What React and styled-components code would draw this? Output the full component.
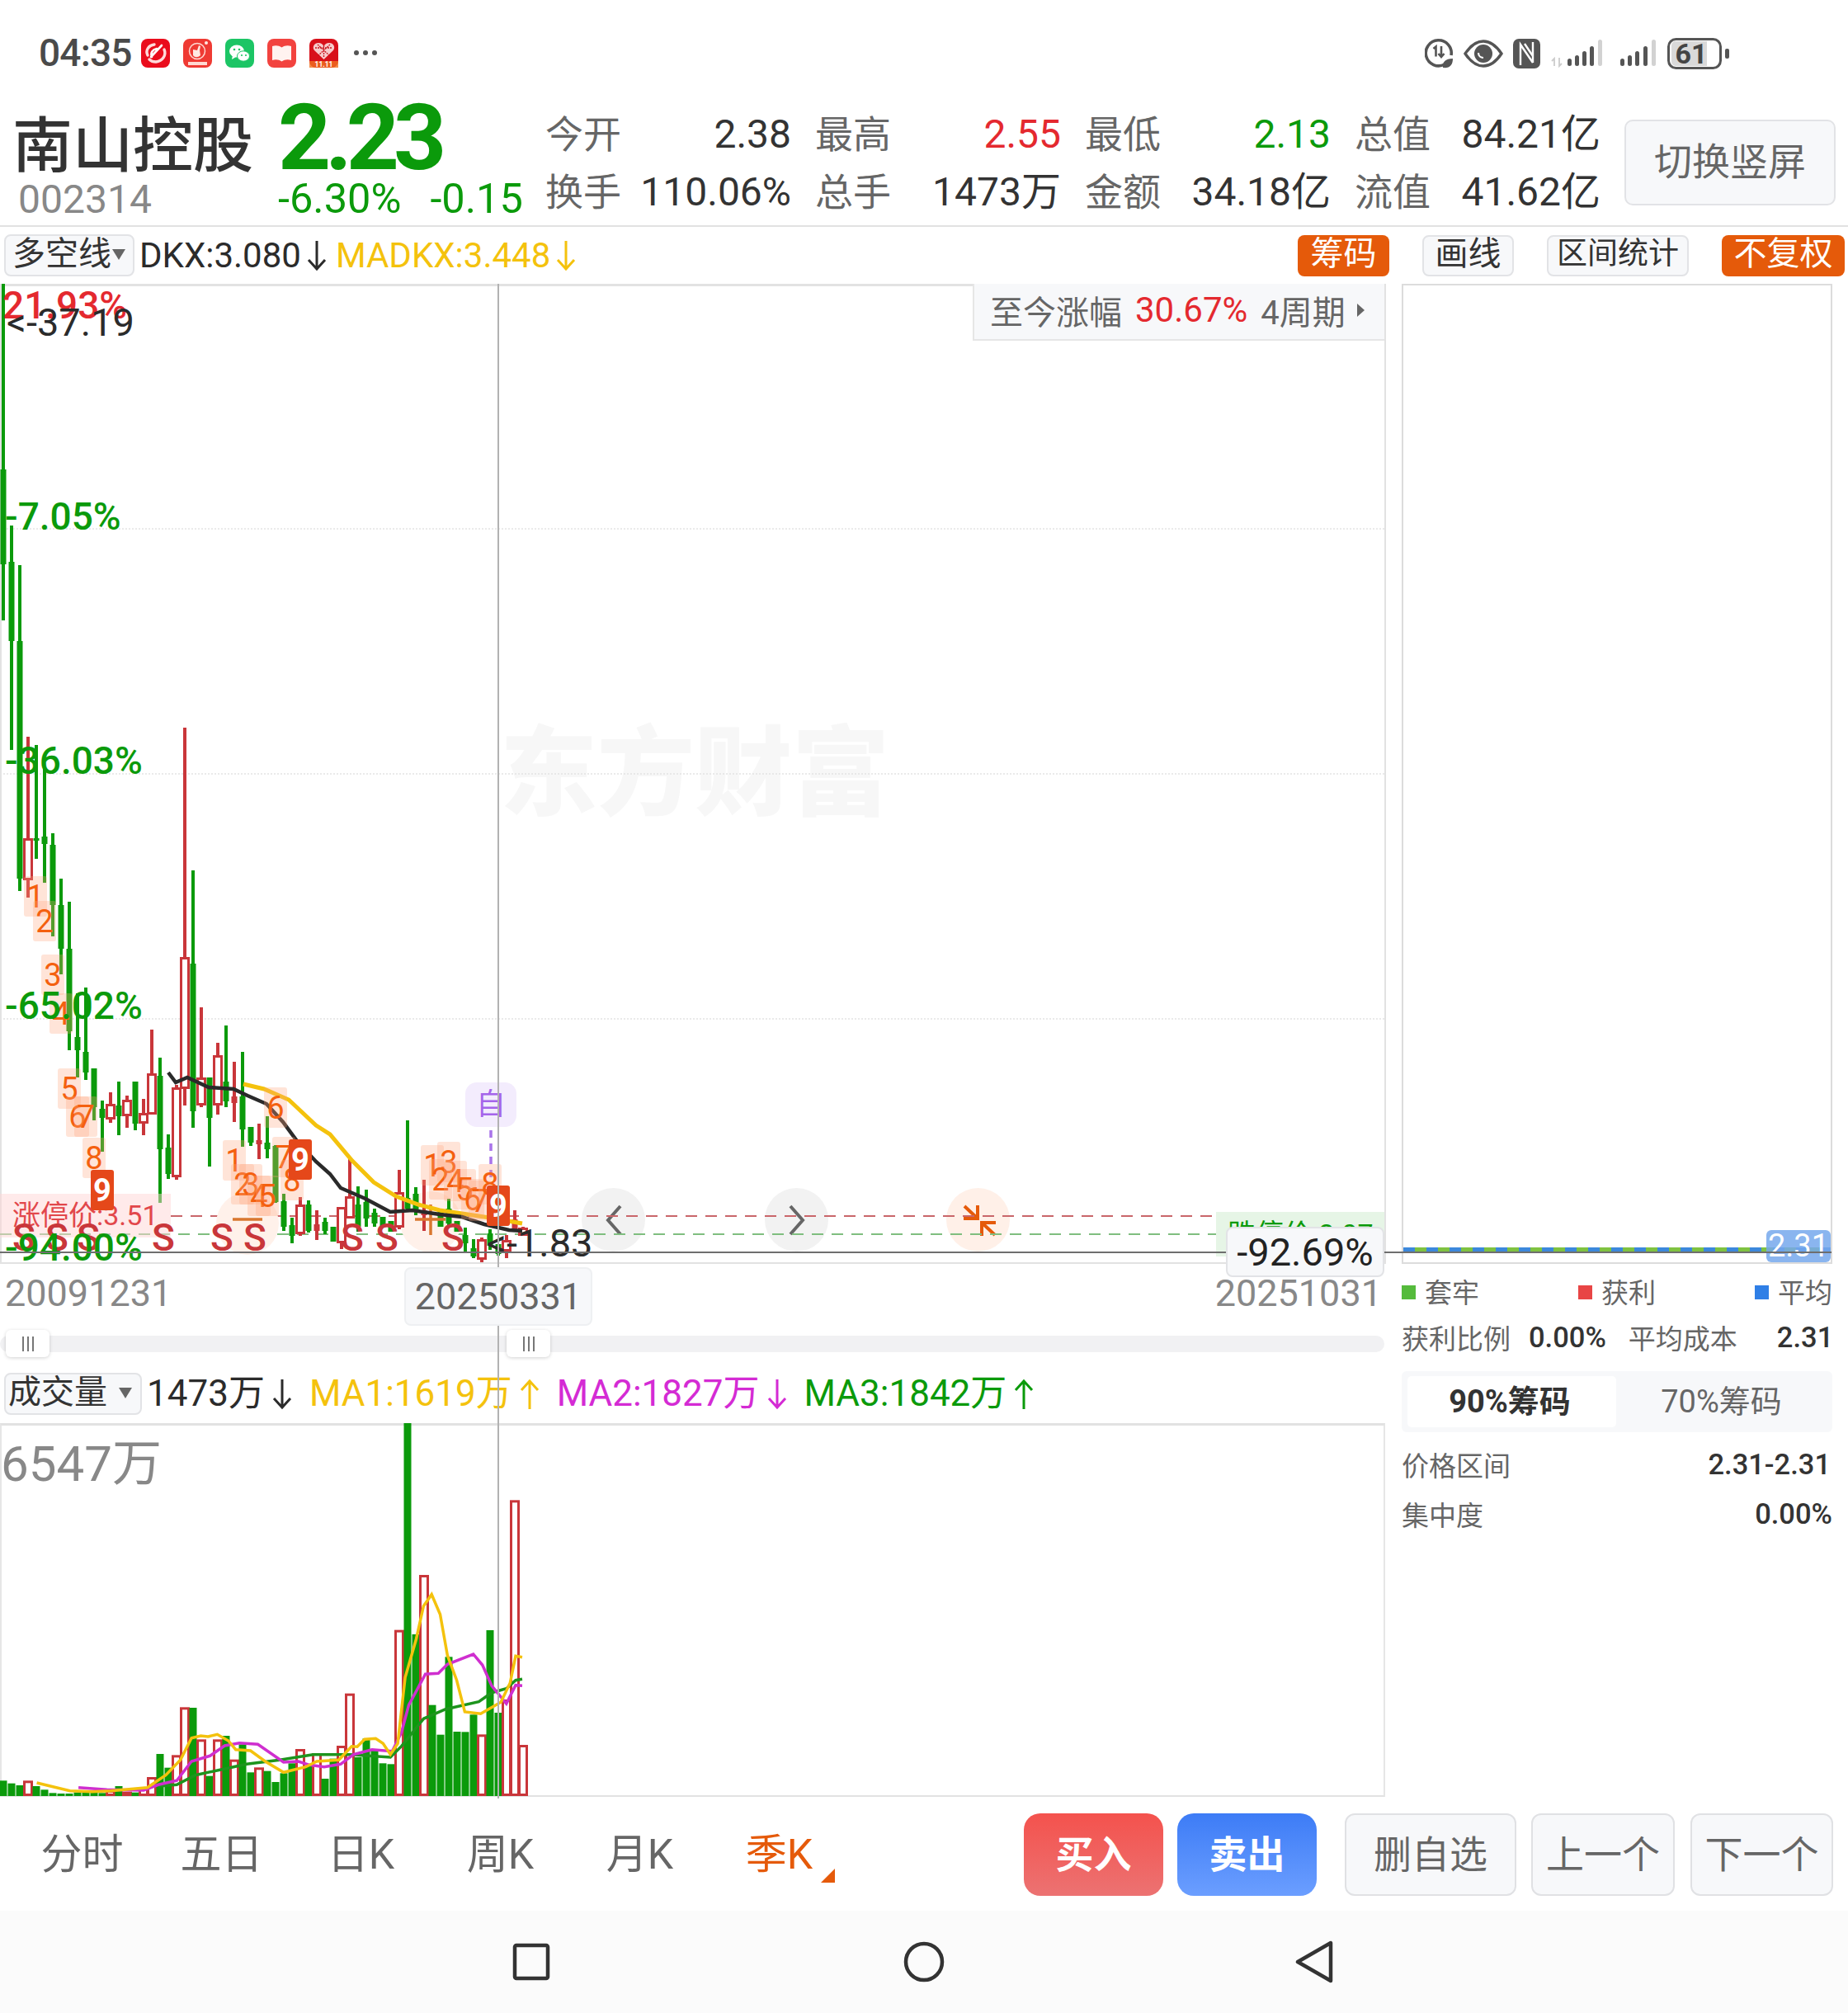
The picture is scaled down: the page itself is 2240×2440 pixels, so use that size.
import React from 'react';
import styled, { createGlobalStyle } from 'styled-components';

const GREEN = '#0b9a0b';
const RED = '#c9363a';
const BRIGHT_RED = '#e4292f';
const ORANGE = '#e55a0a';
const YELLOW = '#f4c20d';
const MAGENTA = '#d42bd4';
const GRAY = '#888888';
const LABEL = '#666666';
const INK = '#2b2b2b';
const SOFT = '#f7f8fa';
const EDGE = '#e2e3e6';
const CHART_TOP = 344;
// overlays are placed against the frame's padding box, below its 3px top border
const CHART_ORIGIN = CHART_TOP + 3;

const Global = createGlobalStyle`
  html, body { margin: 0; padding: 0; background: #fff; }
  body { font-family: Roboto, "Noto Sans CJK SC", sans-serif; width: 2240px; }
  * { box-sizing: border-box; }
`;

const Page = styled.div`
  width: 2240px;
  height: 2440px;
  display: flex;
  flex-direction: column;
  overflow: hidden;
  background: #fff;
  color: ${INK};
  font-family: Roboto, "Noto Sans CJK SC", sans-serif;
`;

/* ---------- status bar ---------- */
const StatusBar = styled.div`
  height: 120px;
  flex: none;
  display: flex;
  align-items: flex-start;
  padding: 47px 143px 0 47px;
`;
const Clock = styled.span`
  font-size: 46px;
  line-height: 35px;
  font-weight: 500;
  color: #4a4a4a;
  width: 124px;
  letter-spacing: -0.8px;
`;
const AppIcons = styled.div`
  display: flex;
  gap: 16px;
`;
const MoreDots = styled.div`
  display: flex;
  gap: 5px;
  margin: 14px 0 0 19px;
  & > i { width: 6px; height: 6px; border-radius: 50%; background: #555; display: block; }
`;
const SystemIcons = styled.div`
  margin-left: auto;
  display: flex;
  align-items: flex-start;
  gap: 12px;
`;

const Tile = ({ children, fill = '#e8101c' }) => (
  <svg width="35" height="35" viewBox="0 0 35 35">
    <rect width="35" height="35" rx="8" fill={fill} />
    {children}
  </svg>
);

const AppIconSet = () => (
  <AppIcons>
    <Tile fill="#ea0c1c">
      <path d="M8 20c-3-6 1-12 8-13M28 13c3 7-2 14-10 15-3 0-6-1-8-3" fill="none" stroke="#ffd9d9" strokeWidth="3.4" strokeLinecap="round" />
      <path d="M13 22c-2-5 1-9 6-10M12 22l13-14" fill="none" stroke="#fff" strokeWidth="2.6" strokeLinecap="round" />
    </Tile>
    <Tile fill="#ef3a33">
      <circle cx="17" cy="15" r="9.5" fill="none" stroke="#ffd9d2" strokeWidth="1.5" />
      <path d="M12 13l5 1 2-6 2 1-1 5 1 6c-3 3-7 3-9 0z" fill="#ffe9e2" />
      <circle cx="28" cy="5" r="2" fill="#ffe9e2" />
      <rect x="6" y="28" width="23" height="4" fill="#ffd9d2" />
    </Tile>
    <Tile fill="#1cc565">
      <ellipse cx="14" cy="15" rx="9" ry="7.5" fill="#fff" />
      <path d="M9 20l-1 5 5-3z" fill="#fff" />
      <ellipse cx="22" cy="21" rx="7.5" ry="6.2" stroke="#1cc565" strokeWidth="1" fill="#fff" />
      <circle cx="11" cy="13" r="1.3" fill="#1cc565" />
      <circle cx="17" cy="13" r="1.3" fill="#1cc565" />
      <circle cx="20" cy="20" r="1.1" fill="#1cc565" />
      <circle cx="25" cy="20" r="1.1" fill="#1cc565" />
    </Tile>
    <Tile fill="#f2433f">
      <path d="M6 9c4-1.500 8-1 11.500 1.500C21 8 25 7.500 29 9v17c-4-1.500-8-1-11.500 1.500C14 25 10 24.500 6 26z" fill="#fff3f0" />
    </Tile>
    <Tile fill="#d8101a">
      <rect y="27" width="35" height="8" fill="#f07020" opacity=".8" />
      <path d="M17.500 25 6 14c-3-4 0-9 5-9 3 0 5 1.500 6.500 4C19 6.500 21 5 24 5c5 0 8 5 5 9z" fill="#f7cccc" />
      <path d="M7 11h21M10 7l15 14M25 7 10 21M17.500 8v15" stroke="#c8141c" strokeWidth="1.300" strokeDasharray="2 1" />
      <text x="17.500" y="33.500" fontSize="8.500" fontWeight="700" fill="#fff" textAnchor="middle" fontFamily="Roboto, sans-serif">11.11</text>
    </Tile>
  </AppIcons>
);

const SystemIconSet = () => (
  <SystemIcons>
    <svg width="35" height="36" viewBox="0 0 35 36">
      <path d="M24 31A15.500 15.500 0 1 1 32 20" fill="none" stroke="#555" strokeWidth="3.600" />
      <path d="M10.500 12l3-2.500v12M20 9v12M16.500 18l3.500 4 3.500-4" fill="none" stroke="#555" strokeWidth="2.600" />
      <path d="M22 35c-1-7 3-11 12-11 0 8-4 12-12 11z" fill="#555" />
    </svg>
    <svg width="48" height="36" viewBox="0 0 48 36">
      <path d="M2 18C10 6 17 3 24 3s14 3 22 15c-8 12-15 15-22 15S10 30 2 18z" fill="none" stroke="#555" strokeWidth="3.400" />
      <circle cx="24" cy="18" r="11" fill="#555" />
      <path d="M18 17c0 4 3 6 6 6" fill="none" stroke="#fff" strokeWidth="2.200" />
    </svg>
    <svg width="33" height="36" viewBox="0 0 33 36">
      <rect width="33" height="36" rx="7" fill="#555" />
      <path d="M9 32V7l15 22M24 4v25M14 6l10 15" fill="none" stroke="#fff" strokeWidth="2.400" />
    </svg>
    <svg width="64" height="36" viewBox="0 0 64 36">
      <path d="M5 33V24l-3 3M11 23v10l3-3" fill="none" stroke="#ccc" strokeWidth="1.800" />
      <rect x="21" y="24" width="5" height="9" rx="2.500" fill="#555" />
      <rect x="30" y="20" width="5" height="13" rx="2.500" fill="#555" />
      <rect x="39" y="15" width="5" height="18" rx="2.500" fill="#555" />
      <rect x="48" y="9" width="5" height="24" rx="2.500" fill="#555" />
      <rect x="58" y="1" width="5" height="32" rx="2.500" fill="#d2d2d2" />
    </svg>
    <svg width="46" height="36" viewBox="0 0 46 36" style={{ marginLeft: 8 }}>
      <rect x="1" y="24" width="5" height="9" rx="2.500" fill="#555" />
      <rect x="10" y="20" width="5" height="13" rx="2.500" fill="#555" />
      <rect x="19" y="15" width="5" height="18" rx="2.500" fill="#555" />
      <rect x="29" y="9" width="5" height="24" rx="2.500" fill="#555" />
      <rect x="39" y="1" width="5" height="32" rx="2.500" fill="#d2d2d2" />
    </svg>
    <svg width="76" height="38" viewBox="0 0 76 38" style={{ marginTop: -1 }}>
      <rect x="1.500" y="1.500" width="63" height="35" rx="9" fill="#fff" stroke="#555" strokeWidth="3" />
      <path d="M5 9a5 5 0 0 1 5-5h38v30H10a5 5 0 0 1-5-5z" fill="#d9d9d9" />
      <rect x="70" y="13" width="5" height="12" rx="2" fill="#555" />
      <text x="29" y="31" fontSize="34" fontWeight="700" fill="#444" textAnchor="middle" fontFamily="Roboto, sans-serif">61</text>
    </svg>
  </SystemIcons>
);

/* ---------- quote header ---------- */
const Quote = styled.header`
  height: 155px;
  flex: none;
  display: flex;
  border-bottom: 2px solid #e2e2e2;
  padding-left: 15px;
`;
const Identity = styled.div`
  width: 322px;
  flex: none;
`;
const StockName = styled.div`
  font-size: 73px;
  line-height: 72px;
  font-weight: 500;
  margin-top: 21px;
  color: #333;
`;
const StockCode = styled.div`
  font-size: 48px;
  line-height: 48px;
  color: ${GRAY};
  margin: 5px 0 0 7px;
`;
const Pricing = styled.div`
  width: 324px;
  flex: none;
  color: ${GREEN};
`;
const BigPrice = styled.div`
  font-size: 112px;
  line-height: 112px;
  font-weight: 700;
  letter-spacing: -7px;
  margin-top: -9px;
`;
const PriceChange = styled.div`
  display: flex;
  gap: 35px;
  font-size: 50.5px;
  line-height: 50px;
  margin-top: -7px;
`;
const StatGrid = styled.div`
  display: grid;
  grid-template-columns: repeat(4, 92px 235px);
  grid-auto-rows: 70px;
  padding-top: 8px;
  width: 1308px;
  flex: none;
  font-size: 46px;
  line-height: 1;
  align-items: center;
`;
const StatLabel = styled.span`
  color: ${LABEL};
  white-space: nowrap;
`;
const StatValue = styled.span`
  text-align: right;
  padding-right: 29px;
  white-space: nowrap;
  font-size: 48px;
  color: ${(p) => p.$color || '#333'};
`;
const SwitchButton = styled.button`
  width: 256px;
  height: 104px;
  margin-top: 25px;
  border: 2px solid ${EDGE};
  border-radius: 10px;
  background: ${SOFT};
  color: ${LABEL};
  font: 46px/1 Roboto, "Noto Sans CJK SC", sans-serif;
  padding: 0 0 2px;
`;

/* ---------- indicator strip ---------- */
const IndicatorStrip = styled.div`
  height: 69px;
  flex: none;
  display: flex;
  align-items: center;
  padding: 0 4px 0 5px;
  font-size: 42px;
`;
const Selector = styled.div`
  width: ${(p) => p.$w}px;
  height: 51px;
  flex: none;
  display: flex;
  align-items: center;
  padding-left: ${(p) => p.$pad}px;
  background: ${SOFT};
  border: 2px solid ${EDGE};
  border-radius: 8px;
  font-size: 40px;
  line-height: 1;
  padding-bottom: 3px;
  color: #333;
  & > i {
    display: block;
    width: 0;
    height: 0;
    margin-left: ${(p) => p.$caret}px;
    border: 8px solid transparent;
    border-top: 13px solid #666;
    border-bottom: 0;
  }
`;
const Reading = styled.span`
  display: inline-flex;
  align-items: center;
  gap: ${(p) => p.$inner || 6}px;
  color: ${(p) => p.$color};
  margin-left: ${(p) => p.$gap}px;
  white-space: nowrap;
`;
const StripActions = styled.div`
  margin-left: auto;
  display: flex;
  gap: 40px;
`;
const StripButton = styled.button`
  height: 50px;
  width: ${(p) => p.$w}px;
  padding: 0 0 4px;
  border-radius: 8px;
  font: ${(p) => p.$size || 40}px/1 Roboto, "Noto Sans CJK SC", sans-serif;
  background: ${(p) => (p.$on ? ORANGE : SOFT)};
  color: ${(p) => (p.$on ? '#fff' : '#333')};
  border: ${(p) => (p.$on ? '0' : `2px solid ${EDGE}`)};
`;

const Arrow = ({ up, color }) => (
  <svg width="26" height="38" viewBox="0 0 26 38">
    {up ? (
      <path d="M13 37V3M3 14 13 3l10 11" fill="none" stroke={color} strokeWidth="3" />
    ) : (
      <path d="M13 1v34M3 24l10 11 10-11" fill="none" stroke={color} strokeWidth="3" />
    )}
  </svg>
);

/* ---------- main area ---------- */
const Main = styled.div`
  position: relative;
  display: flex;
  flex: none;
  height: 1834px;
`;
const LeftColumn = styled.div`
  width: 1680px;
  flex: none;
  display: flex;
  flex-direction: column;
`;
const KlineFrame = styled.div`
  position: relative;
  height: 1188px;
  flex: none;
  border: 2px solid #e2e2e2;
  border-top-width: 3px;
  background: #fff;
`;
const Drawing = styled.svg`
  position: absolute;
  left: -2px;
  top: ${(p) => p.$top}px;
  display: block;
`;
const Watermark = styled.div`
  position: absolute;
  left: 604px;
  top: 533px;
  font-size: 118px;
  line-height: 118px;
  font-weight: 900;
  color: #f7f7f7;
  white-space: nowrap;
`;
const AxisText = styled.span`
  position: absolute;
  left: ${(p) => p.$x - 2}px;
  top: ${(p) => p.$y - CHART_ORIGIN - 7}px;
  font-size: ${(p) => p.$size || 46}px;
  font-weight: ${(p) => p.$weight || 400};
  line-height: 1;
  color: ${(p) => p.$color};
  white-space: nowrap;
`;
const Signal = styled(AxisText)`
  font-weight: 500;
  color: ${RED};
`;
const TdMark = styled.span`
  position: absolute;
  width: 28px;
  height: 49px;
  display: flex;
  align-items: center;
  justify-content: center;
  font-size: 38px;
  line-height: 1;
  border-radius: 3px;
  background: ${(p) => (p.$dark ? '#e5481a' : 'rgba(255, 165, 125, .3)')};
  color: ${(p) => (p.$dark ? '#fff' : '#f4600f')};
  font-weight: ${(p) => (p.$dark ? 700 : 400)};
`;
const SinceTag = styled.div`
  position: absolute;
  right: 0;
  top: -3px;
  width: 499px;
  height: 69px;
  display: flex;
  align-items: center;
  padding: 0 0 4px 19px;
  background: ${SOFT};
  border-left: 2px solid #e6e6e6;
  border-bottom: 2px solid #e6e6e6;
  font-size: 40px;
  color: ${LABEL};
  white-space: nowrap;
  & > b { font-weight: 400; font-size: 42px; color: ${BRIGHT_RED}; margin: 0 16px 0 16px; }
  & > i {
    display: block;
    width: 0;
    height: 0;
    margin-left: 14px;
    border: 8px solid transparent;
    border-left: 9px solid #666;
    border-right: 0;
  }
`;
const LimitBadge = styled.div`
  position: absolute;
  ${(p) => (p.$side === 'left' ? 'left: -2px;' : 'right: 0;')}
  top: ${(p) => p.$y - CHART_ORIGIN}px;
  width: ${(p) => p.$w}px;
  height: ${(p) => p.$h}px;
  padding-left: ${(p) => p.$pad}px;
  background: ${(p) => p.$bg};
  color: ${(p) => p.$color};
  font-size: 34px;
  line-height: ${(p) => p.$h}px;
  white-space: nowrap;
  overflow: hidden;
`;
const PercentTag = styled.div`
  position: absolute;
  right: 0;
  top: ${1487 - CHART_ORIGIN}px;
  width: 192px;
  height: 61px;
  z-index: 3;
  display: flex;
  align-items: center;
  justify-content: center;
  background: ${SOFT};
  border: 2px solid ${EDGE};
  border-radius: 8px;
  font-size: 47px;
  color: #222;
`;
const NavCircle = styled.div`
  position: absolute;
  left: ${(p) => p.$x - 40}px;
  top: ${1440 - CHART_ORIGIN}px;
  width: 77px;
  height: 77px;
  border-radius: 50%;
  background: ${(p) => p.$bg};
  display: flex;
  align-items: center;
  justify-content: center;
`;
const SelfTag = styled.div`
  position: absolute;
  left: 562px;
  top: ${1312 - CHART_ORIGIN}px;
  width: 62px;
  height: 54px;
  border-radius: 14px;
  background: #f3ecfd;
  color: #a565ea;
  font-size: 36px;
  line-height: 54px;
  text-align: center;
`;
const Crosshair = styled.div`
  position: absolute;
  left: 603px;
  top: 0;
  height: 1836px;
  width: 2px;
  background: #b2b2b2;
  z-index: 2;
  pointer-events: none;
`;
const BaseLine = styled.div`
  position: absolute;
  left: 0;
  width: 2220px;
  top: ${1517 - CHART_TOP}px;
  height: 2px;
  background: #6e6e6e;
  z-index: 2;
`;
const DateRow = styled.div`
  position: relative;
  height: 80px;
  flex: none;
  display: flex;
  justify-content: space-between;
  padding: 13px 5px 0 6px;
  font-size: 45px;
  line-height: 46px;
  color: ${GRAY};
`;
const CursorDate = styled.div`
  position: absolute;
  left: 490px;
  top: 4px;
  width: 228px;
  height: 71px;
  z-index: 3;
  display: flex;
  align-items: center;
  justify-content: center;
  background: ${SOFT};
  border: 2px solid #eef0f2;
  border-radius: 8px;
  color: ${LABEL};
`;
const ScrollRow = styled.div`
  position: relative;
  height: 40px;
  flex: none;
  padding-top: 7px;
`;
const ScrollTrack = styled.div`
  height: 20px;
  width: 1678px;
  border-radius: 10px;
  background: #f1f1f3;
`;
const ScrollHandle = styled.div`
  position: absolute;
  left: ${(p) => p.$x}px;
  top: 0;
  width: 53px;
  height: 33px;
  z-index: 3;
  background: #fff;
  border-radius: 6px;
  box-shadow: 0 1px 4px rgba(0, 0, 0, .18);
  display: flex;
  align-items: center;
  justify-content: center;
  gap: 4px;
  & > i { display: block; width: 2px; height: 18px; background: #777; }
`;
const VolumeStrip = styled.div`
  height: 73px;
  flex: none;
  display: flex;
  align-items: flex-start;
  padding: 12px 0 0 5px;
  font-size: 44px;
  line-height: 51px;
`;
const VolumeFrame = styled.div`
  position: relative;
  height: 453px;
  flex: none;
  width: 1679px;
  border-top: 3px solid #e2e2e2;
  border-left: 2px solid #e6e6e6;
  border-right: 2px solid #e6e6e6;
  border-bottom: 2px solid #e2e2e2;
`;
const VolumeMax = styled.div`
  position: absolute;
  left: -1px;
  top: 17px;
  font-size: 60px;
  line-height: 60px;
  color: ${GRAY};
  z-index: 1;
`;

/* ---------- chip panel ---------- */
const ChipPanel = styled.aside`
  width: 522px;
  margin-left: 19px;
  flex: none;
  font-size: 33px;
  color: ${LABEL};
`;
const ChipFrame = styled.div`
  position: relative;
  height: 1188px;
  border: 2px solid #dcdcdc;
`;
const AverageLine = styled.div`
  position: absolute;
  left: 0;
  right: 0;
  top: ${1512 - CHART_TOP - 2}px;
  height: 6px;
  background: repeating-linear-gradient(90deg, #3c88dc 0 14px, #7fc241 14px 28px);
`;
const AverageBadge = styled.div`
  position: absolute;
  right: 0;
  bottom: 0;
  width: 78px;
  height: 39px;
  border-radius: 6px;
  background: rgba(118, 168, 236, .85);
  color: #fff;
  font-size: 38px;
  line-height: 39px;
  text-align: center;
  z-index: 1;
`;
const Legend = styled.div`
  height: 68px;
  display: flex;
  align-items: center;
  justify-content: space-between;
  padding-bottom: 3px;
`;
const LegendItem = styled.span`
  display: flex;
  align-items: center;
  gap: 11px;
  &::before {
    content: '';
    width: 17px;
    height: 17px;
    margin-top: 3px;
    background: ${(p) => p.$color};
  }
`;
const ChipRow = styled.div`
  height: ${(p) => p.$h}px;
  display: flex;
  align-items: center;
  white-space: nowrap;
  justify-content: ${(p) => (p.$spread ? 'space-between' : 'flex-start')};
  padding-right: ${(p) => p.$end || 0}px;
  margin-top: ${(p) => p.$top || 0}px;
`;
const ChipValue = styled.b`
  font-weight: 500;
  font-size: 34.5px;
  color: #333;
  margin-left: ${(p) => p.$gap || 0}px;
  margin-right: ${(p) => p.$after || 0}px;
`;
const Toggle = styled.div`
  height: 74px;
  margin-top: 20px;
  padding: 6px 7px;
  display: flex;
  background: ${SOFT};
  border-radius: 6px;
  font-size: 38px;
  line-height: 1;
`;
const ToggleItem = styled.div`
  flex: ${(p) => (p.$on ? '0 0 253px' : '1')};
  display: flex;
  align-items: center;
  justify-content: center;
  padding-right: ${(p) => (p.$on ? 5 : 0)}px;
  border-radius: 5px;
  background: ${(p) => (p.$on ? '#fff' : 'transparent')};
  color: ${(p) => (p.$on ? '#333' : LABEL)};
  font-weight: ${(p) => (p.$on ? 700 : 400)};
`;

/* ---------- bottom ---------- */
const BottomBar = styled.div`
  height: 138px;
  flex: none;
  display: flex;
  padding: 20px 18px 0 15px;
`;
const Periods = styled.div`
  display: flex;
  height: 100px;
`;
const Period = styled.div`
  position: relative;
  width: 169px;
  display: flex;
  align-items: center;
  justify-content: center;
  font-size: 50px;
  line-height: 1;
  color: ${(p) => (p.$on ? ORANGE : LABEL)};
  &::after {
    content: '';
    display: ${(p) => (p.$on ? 'block' : 'none')};
    position: absolute;
    left: 135px;
    bottom: 16px;
    border-right: 17px solid ${ORANGE};
    border-top: 17px solid transparent;
  }
`;
const Actions = styled.div`
  margin-left: auto;
  display: flex;
`;
const TradeButton = styled.button`
  width: 169px;
  height: 100px;
  margin-right: ${(p) => p.$after}px;
  padding: 0;
  border: 0;
  border-radius: 20px;
  background: linear-gradient(180deg, ${(p) => p.$from}, ${(p) => p.$to});
  color: #fff;
  font: 700 46px/1 Roboto, "Noto Sans CJK SC", sans-serif;
`;
const PlainButton = styled.button`
  width: ${(p) => p.$w}px;
  height: 100px;
  margin-right: ${(p) => p.$after || 0}px;
  padding: 0;
  border: 2px solid #e0e1e4;
  border-radius: 12px;
  background: ${SOFT};
  color: ${LABEL};
  font: 46px/1 Roboto, "Noto Sans CJK SC", sans-serif;
`;
const NavBar = styled.nav`
  height: 124px;
  flex: none;
  background: #fbfbfb;
  display: flex;
  gap: 426px;
  padding-left: 620px;
  align-items: center;
`;

/* ---------- data ---------- */
// index, high, low, body top, body bottom, colour key, hollow
const candles = [
  [0, 344, 752, 569, 684, 'g'], [1, 637, 909, 681, 777, 'g'], [2, 685, 1080, 777, 1065, 'g'],
  [3, 893, 1088, 1016, 1067, 'r', 1], [4, 903, 1041, 1016, 1019, 'g'], [5, 930, 1070, 1014, 1023, 'g'],
  [6, 1010, 1135, 1024, 1097, 'g'], [7, 1065, 1181, 1097, 1150, 'g'], [8, 1093, 1273, 1150, 1250, 'g'],
  [9, 1204, 1306, 1257, 1273, 'g'], [10, 1197, 1309, 1275, 1300, 'g'], [11, 1295, 1358, 1295, 1342, 'g'],
  [12, 1334, 1396, 1344, 1355, 'g'], [13, 1324, 1361, 1338, 1357, 'r', 1], [14, 1311, 1376, 1340, 1353, 'g'],
  [15, 1328, 1367, 1333, 1353, 'r', 1], [16, 1311, 1370, 1311, 1362, 'g'], [17, 1332, 1376, 1349, 1362, 'r', 1],
  [18, 1248, 1351, 1301, 1351, 'r', 1], [19, 1282, 1458, 1304, 1393, 'g'], [20, 1375, 1429, 1391, 1423, 'g'],
  [21, 1315, 1430, 1318, 1427, 'r', 1], [22, 882, 1340, 1160, 1320, 'r', 1], [23, 1055, 1367, 1168, 1347, 'g'],
  [24, 1221, 1342, 1306, 1340, 'r', 1], [25, 1306, 1414, 1306, 1355, 'g'], [26, 1264, 1351, 1279, 1340, 'r', 1],
  [27, 1243, 1342, 1311, 1335, 'g'], [28, 1287, 1360, 1329, 1337, 'r'], [29, 1275, 1390, 1329, 1369, 'g'],
  [30, 1366, 1389, 1366, 1385, 'g'], [31, 1362, 1405, 1382, 1387, 'r'], [32, 1353, 1404, 1385, 1393, 'g'],
  [33, 1388, 1458, 1389, 1457, 'g'], [34, 1447, 1492, 1456, 1487, 'g'], [35, 1476, 1507, 1485, 1498, 'g'],
  [36, 1451, 1498, 1460, 1496, 'r', 1], [37, 1455, 1494, 1460, 1492, 'g'], [38, 1467, 1503, 1484, 1492, 'r'],
  [39, 1476, 1496, 1481, 1492, 'g'], [40, 1487, 1505, 1487, 1505, 'g'], [41, 1463, 1514, 1463, 1507, 'r', 1],
  [42, 1403, 1477, 1450, 1477, 'r', 1], [43, 1438, 1493, 1460, 1487, 'g'], [44, 1442, 1487, 1457, 1477, 'g'],
  [45, 1465, 1487, 1470, 1483, 'g'], [46, 1475, 1487, 1475, 1487, 'g'], [47, 1480, 1493, 1480, 1493, 'g'],
  [48, 1418, 1490, 1445, 1488, 'r', 1], [49, 1358, 1467, 1452, 1465, 'g'], [50, 1439, 1473, 1447, 1467, 'g'],
  [51, 1430, 1492, 1467, 1473, 'r'], [53, 1467, 1487, 1467, 1487, 'g'], [54, 1453, 1487, 1465, 1483, 'g'],
  [55, 1480, 1493, 1480, 1493, 'g'], [56, 1488, 1517, 1497, 1507, 'g'], [57, 1502, 1525, 1513, 1523, 'g'],
  [58, 1500, 1530, 1502, 1527, 'r', 1], [59, 1490, 1515, 1495, 1510, 'g'], [60, 1508, 1522, 1508, 1520, 'g'],
  [61, 1497, 1525, 1503, 1517, 'r', 1], [62, 1467, 1490, 1478, 1490, 'r'], [63, 1487, 1498, 1488, 1498, 'r', 1],
];

const dkxLine = '204,1300 213,1312 227,1306 253,1318 283,1320 300,1328 323,1338 343,1360 360,1383 383,1408 400,1423 413,1440 443,1453 473,1469 500,1467 533,1472 560,1475 587,1484 617,1491 633,1492';
const madkxLine = '295,1314 320,1320 350,1333 383,1364 400,1375 427,1407 453,1433 480,1450 507,1460 533,1467 567,1472 600,1477 633,1483';

const tdMarks = [
  [1, 43, 1086], [2, 54, 1116], [3, 64, 1181], [4, 74, 1228], [5, 84, 1319], [6, 94, 1353], [7, 104, 1353], [8, 114, 1403], [9, 124, 1442, 1],
  [1, 284, 1406], [2, 294, 1435], [3, 304, 1435], [4, 314, 1449], [5, 324, 1449], [6, 334, 1342], [7, 344, 1402], [8, 354, 1430], [9, 364, 1405, 1],
  [1, 524, 1412], [3, 544, 1408], [2, 534, 1429], [4, 552, 1431], [5, 563, 1441], [6, 573, 1453], [7, 582, 1455], [8, 594, 1435], [9, 604, 1461, 1],
];

const signals = [15, 55, 93, 184, 255, 295, 413, 455, 535];

// top of each volume bar, read in a 3x crop whose origin is y = 1780
const volumeTops = [
  1135, 1145, 1152, 1135, 1155, 1168, 1180, 1182, 1182, 1178, 1178, 1178, 1180, 1170, 1155, 1175,
  1178, 1160, 1122, 1038, 1088, 1042, 868, 870, 985, 1118, 985, 972, 1058, 1003, 1105, 1087,
  1100, 1140, 1108, 1072, 1020, 1082, 1035, 1128, 1055, 1008, 818, 1050, 982, 1020, 1072, 1075,
  587, -170, 603, 387, 860, 968, 685, 957, 958, 895, 967, 588, 888, 840, 115, 1005,
];
const volumeRed = new Set([3, 13, 15, 17, 18, 21, 22, 24, 26, 28, 31, 36, 38, 41, 42, 48, 51, 58, 61, 62, 63]);

const cropPoints = (list) =>
  list.map(([x, y]) => `${(x / 2.24).toFixed(1)},${(1780 + y / 3).toFixed(1)}`).join(' ');
const ma1 = cropPoints([[100,1143],[190,1172],[250,1175],[300,1172],[400,1160],[450,1115],[490,1060],[520,980],[545,972],[565,975],[590,967],[620,990],[640,1022],[680,1026],[720,1065],[770,1105],[830,1085],[860,1065],[920,1060],[955,1010],[970,1012],[990,985],[1020,982],[1040,1000],[1060,1040],[1080,1000],[1100,760],[1130,620],[1150,500],[1172,458],[1195,530],[1215,680],[1240,770],[1262,885],[1305,892],[1360,850],[1385,780],[1400,682],[1418,686]]);
const ma2 = cropPoints([[213,1160],[290,1168],[390,1170],[430,1150],[480,1135],[520,1065],[570,1045],[610,1008],[650,998],[700,1003],[770,1068],[810,1065],[840,1078],[880,1085],[925,1075],[960,1040],[1010,1022],[1065,1028],[1090,960],[1110,860],[1130,810],[1155,748],[1190,745],[1215,712],[1285,675],[1310,715],[1335,790],[1375,855],[1400,788],[1418,790]]);
const ma3 = cropPoints([[430,1155],[480,1150],[530,1115],[600,1095],[670,1075],[760,1060],[850,1040],[950,1040],[1000,1045],[1060,1050],[1090,1010],[1120,960],[1150,910],[1210,875],[1300,848],[1335,815],[1375,800],[1400,770],[1418,766]]);

const stats = [
  ['今开', '2.38'], ['最高', '2.55', BRIGHT_RED], ['最低', '2.13', GREEN], ['总值', '84.21亿'],
  ['换手', '110.06%'], ['总手', '1473万'], ['金额', '34.18亿'], ['流值', '41.62亿'],
];

const KlineDrawing = () => (
  <Drawing $top={-3} width="1680" height="1190" viewBox={`0 ${CHART_TOP} 1680 1190`}>
    {[641, 938, 1235].map((y) => (
      <line key={y} x1="0" x2="1680" y1={y} y2={y} stroke="#e3e3e3" strokeWidth="1.500" strokeDasharray="2 2" />
    ))}
    <line x1="207" x2="1678" y1="1474" y2="1474" stroke="#c9666a" strokeWidth="2" strokeDasharray="14 10" />
    <line x1="0" x2="1474" y1="1496" y2="1496" stroke="#7fbe7f" strokeWidth="2" strokeDasharray="14 10" />
    <circle cx="300" cy="1483" r="38" fill="#fff1ea" />
    <circle cx="522" cy="1481" r="37" fill="#fff1ea" />
    {candles.map(([i, hi, lo, top, bottom, key, hollow]) => {
      const x = 4 + i * 10;
      const color = key === 'g' ? GREEN : RED;
      return (
        <g key={i}>
          <rect x={x - 2} y={hi} width="4" height={lo - hi} fill={color} />
          {hollow ? (
            <rect x={x - 4.5} y={top + 1.5} width="9" height={bottom - top - 3} fill="#fff" stroke={color} strokeWidth="3" />
          ) : (
            <rect x={x - 3.5} y={top} width="7" height={bottom - top} fill={color} />
          )}
        </g>
      );
    })}
    <path d="M282 1478h36M503 1478h37M522 1460v37" stroke="#d9772f" strokeWidth="3.500" fill="none" />
    <line x1="595" x2="595" y1="1370" y2="1432" stroke="#a974ea" strokeWidth="3.500" strokeDasharray="9 7" />
    <polyline points={madkxLine} fill="none" stroke={YELLOW} strokeWidth="5" />
    <polyline points={dkxLine} fill="none" stroke="#2a2a2a" strokeWidth="4.500" />
  </Drawing>
);

const VolumeDrawing = () => (
  <Drawing $top={-3} width="1680" height="453" viewBox="0 1725 1680 453">
    {volumeTops.map((value, i) => {
      const x = 4 + i * 10;
      const top = Math.max(1725, 1780 + value / 3);
      return volumeRed.has(i) ? (
        <rect key={i} x={x - 4.5} y={top + 1.5} width="9" height={2177 - top - 3} fill="#fff" stroke={RED} strokeWidth="3" />
      ) : (
        <rect key={i} x={x - 4.5} y={top} width="9" height={2177 - top} fill={GREEN} />
      );
    })}
    <polyline points={ma3} fill="none" stroke="#1d941d" strokeWidth="3.500" />
    <polyline points={ma2} fill="none" stroke="#cf2fcf" strokeWidth="3.500" />
    <polyline points={ma1} fill="none" stroke={YELLOW} strokeWidth="3.500" />
  </Drawing>
);

const Chevron = ({ right }) => (
  <svg width="22" height="38" viewBox="0 0 22 38">
    <path d={right ? 'M3 2l15 17L3 36' : 'M19 2 4 19l15 17'} fill="none" stroke="#666" strokeWidth="4" />
  </svg>
);

export default function App() {
  return (
    <Page>
      <Global />
      <StatusBar>
        <Clock>04:35</Clock>
        <AppIconSet />
        <MoreDots><i /><i /><i /></MoreDots>
        <SystemIconSet />
      </StatusBar>

      <Quote>
        <Identity>
          <StockName>南山控股</StockName>
          <StockCode>002314</StockCode>
        </Identity>
        <Pricing>
          <BigPrice>2.23</BigPrice>
          <PriceChange><span>-6.30%</span><span>-0.15</span></PriceChange>
        </Pricing>
        <StatGrid>
          {stats.map(([label, value, color]) => (
            <React.Fragment key={label}>
              <StatLabel>{label}</StatLabel>
              <StatValue $color={color}>{value}</StatValue>
            </React.Fragment>
          ))}
        </StatGrid>
        <SwitchButton>切换竖屏</SwitchButton>
      </Quote>

      <IndicatorStrip>
        <Selector $w={158} $pad={8} $caret={1}>多空线<i /></Selector>
        <Reading $color="#2b2b2b" $gap={6}>DKX:3.080<Arrow color="#2b2b2b" /></Reading>
        <Reading $color={YELLOW} $gap={10}>MADKX:3.448<Arrow color={YELLOW} /></Reading>
        <StripActions>
          <StripButton $on $w={111}>筹码</StripButton>
          <StripButton $w={111}>画线</StripButton>
          <StripButton $w={172} $size={37}>区间统计</StripButton>
          <StripButton $on $w={149}>不复权</StripButton>
        </StripActions>
      </IndicatorStrip>

      <Main>
        <Crosshair />
        <BaseLine />
        <LeftColumn>
          <KlineFrame>
            <Watermark>东方财富</Watermark>
            <NavCircle $x={743} $bg="#f2f2f2"><Chevron /></NavCircle>
            <NavCircle $x={965} $bg="#f2f2f2"><Chevron right /></NavCircle>
            <NavCircle $x={1185} $bg="#fff0e8">
              <svg width="44" height="44" viewBox="0 0 44 44">
                <path d="M5 5l16 15M21 4v16H4M42 40 26 25M26 41V25h17" fill="none" stroke={ORANGE} strokeWidth="4" />
              </svg>
            </NavCircle>
            <KlineDrawing />
            <SinceTag>至今涨幅<b>30.67%</b>4周期<i /></SinceTag>
            <LimitBadge $side="left" $y={1447} $w={207} $h={53} $pad={15} $bg="rgba(255, 214, 214, .5)" $color="#e2474b">涨停价:3.51</LimitBadge>
            <LimitBadge $side="right" $y={1469} $w={204} $h={54} $pad={14} $bg="#e6f5e6" $color={GREEN}>跌停价:2.07</LimitBadge>
            {signals.map((x) => <Signal key={x} $x={x} $y={1484} $color={RED}>S</Signal>)}
            {tdMarks.map(([n, x, y, dark], i) => (
              <TdMark key={i} $dark={dark} style={{ left: x - 16, top: y - CHART_TOP - 27 }}>{n}</TdMark>
            ))}
            <AxisText $x={3} $y={354} $color={BRIGHT_RED} $weight={500}>21.93%</AxisText>
            <AxisText $x={8} $y={374} $size={47} $color="#2b2b2b">&lt;-37.19</AxisText>
            <AxisText $x={6} $y={610} $color={GREEN} $weight={500}>-7.05%</AxisText>
            <AxisText $x={6} $y={906} $color={GREEN} $weight={500}>-36.03%</AxisText>
            <AxisText $x={6} $y={1203} $color={GREEN} $weight={500}>-65.02%</AxisText>
            <AxisText $x={6} $y={1496} $color={GREEN} $weight={500}>-94.00%</AxisText>
            <AxisText $x={590} $y={1490} $size={47} $color="#2b2b2b">&lt;-1.83</AxisText>
            <SelfTag>自</SelfTag>
            <PercentTag>-92.69%</PercentTag>
          </KlineFrame>

          <DateRow>
            <span>20091231</span>
            <CursorDate>20250331</CursorDate>
            <span>20251031</span>
          </DateRow>

          <ScrollRow>
            <ScrollTrack />
            <ScrollHandle $x={7}><i /><i /><i /></ScrollHandle>
            <ScrollHandle $x={614}><i /><i /><i /></ScrollHandle>
          </ScrollRow>

          <VolumeStrip>
            <Selector $w={167} $pad={3} $caret={14}>成交量<i /></Selector>
            <Reading $color="#2b2b2b" $gap={6} $inner={8}>1473万<Arrow color="#2b2b2b" /></Reading>
            <Reading $color={YELLOW} $gap={20} $inner={8}>MA1:1619万<Arrow up color={YELLOW} /></Reading>
            <Reading $color={MAGENTA} $gap={20} $inner={8}>MA2:1827万<Arrow color={MAGENTA} /></Reading>
            <Reading $color={GREEN} $gap={20} $inner={8}>MA3:1842万<Arrow up color={GREEN} /></Reading>
          </VolumeStrip>

          <VolumeFrame>
            <VolumeDrawing />
            <VolumeMax>6547万</VolumeMax>
          </VolumeFrame>
        </LeftColumn>

        <ChipPanel>
          <ChipFrame>
            <AverageLine />
            <AverageBadge>2.31</AverageBadge>
          </ChipFrame>
          <Legend>
            <LegendItem $color="#55bb3c">套牢</LegendItem>
            <LegendItem $color="#e84545">获利</LegendItem>
            <LegendItem $color="#2f7fe6">平均</LegendItem>
          </Legend>
          <ChipRow $h={42}>
            获利比例<ChipValue $gap={22} $after={27}>0.00%</ChipValue>平均成本
            <ChipValue $gap={48}>2.31</ChipValue>
          </ChipRow>
          <Toggle>
            <ToggleItem $on>90%筹码</ToggleItem>
            <ToggleItem>70%筹码</ToggleItem>
          </Toggle>
          <ChipRow $h={60} $top={9} $spread $end={2}>价格区间<ChipValue>2.31-2.31</ChipValue></ChipRow>
          <ChipRow $h={60} $spread>集中度<ChipValue>0.00%</ChipValue></ChipRow>
        </ChipPanel>
      </Main>

      <BottomBar>
        <Periods>
          <Period>分时</Period>
          <Period>五日</Period>
          <Period>日K</Period>
          <Period>周K</Period>
          <Period>月K</Period>
          <Period $on>季K</Period>
        </Periods>
        <Actions>
          <TradeButton $from="#f4524d" $to="#ec7272" $after={17}>买入</TradeButton>
          <TradeButton $from="#3d7cf6" $to="#6b9eff" $after={34}>卖出</TradeButton>
          <PlainButton $w={208} $after={18}>删自选</PlainButton>
          <PlainButton $w={174} $after={19}>上一个</PlainButton>
          <PlainButton $w={173}>下一个</PlainButton>
        </Actions>
      </BottomBar>

      <NavBar>
        <svg width="48" height="48" viewBox="0 0 48 48">
          <rect x="4" y="4" width="40" height="40" rx="2" fill="none" stroke="#333" strokeWidth="4.500" />
        </svg>
        <svg width="52" height="52" viewBox="0 0 52 52">
          <circle cx="26" cy="26" r="22" fill="none" stroke="#333" strokeWidth="4.500" />
        </svg>
        <svg width="48" height="52" viewBox="0 0 48 52" style={{ marginLeft: -3 }}>
          <path d="M44 3v46L4 26z" fill="none" stroke="#333" strokeWidth="4.500" strokeLinejoin="round" />
        </svg>
      </NavBar>
    </Page>
  );
}
